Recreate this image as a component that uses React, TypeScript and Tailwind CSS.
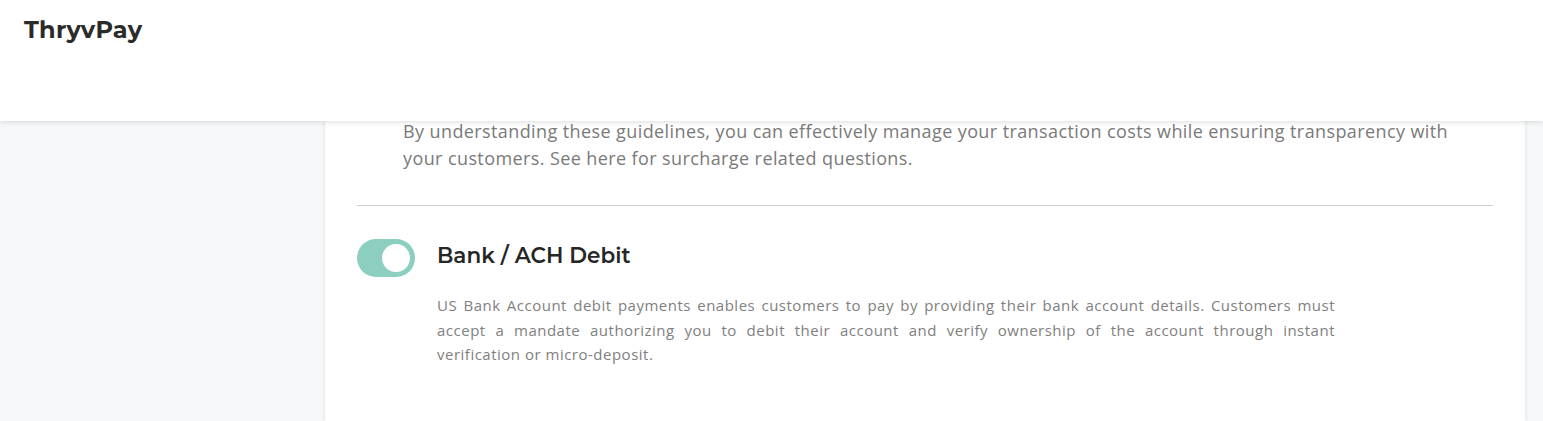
import React from "react";

export default function App() {
  return (
    <div className="h-[421px] w-[1543px] overflow-hidden bg-[#f7f8fa] flex flex-col">
      <header className="relative z-10 h-[121px] shrink-0 bg-white shadow-[0_1px_6px_rgba(0,0,0,0.14)] px-6 pt-[14px]">
        <h1 className="text-[24px] font-bold text-[#2b2b2b] font-['Montserrat','Inter',sans-serif] leading-8 tracking-[0.25px]">
          ThryvPay
        </h1>
      </header>
      <div className="flex flex-1 min-h-0">
        <aside className="w-[325px] shrink-0" />
        <main className="w-[1200px] shrink-0 bg-white shadow-[0_0_4px_rgba(0,0,0,0.12)] px-8">
          <div className="border-b border-[#cccccc] pb-[33px] pl-[46px] pr-[20px] -mt-[3px]">
            <p className="font-['Open_Sans',sans-serif] text-[18px] tracking-[0.4px] leading-[27px] text-[#7a7a7a]">
              By understanding these guidelines, you can effectively manage your transaction costs while ensuring transparency with your customers. See here for surcharge related questions.
            </p>
          </div>
          <div className="pt-[33px] flex gap-[22px]">
            <button className="h-[38px] w-[58px] shrink-0 rounded-full bg-[#8ccfc1] flex items-center justify-end pr-[5px]">
              <span className="block h-[28px] w-[28px] rounded-full bg-white" />
            </button>
            <div className="flex flex-col">
              <h2 className="pt-[2px] font-['Montserrat','Inter',sans-serif] text-[21.5px] font-semibold leading-[28px] text-[#262626]">
                Bank / ACH Debit
              </h2>
              <p className="mt-[24px] w-[898px] text-justify font-['Open_Sans',sans-serif] text-[15px] tracking-[0.5px] leading-[24.5px] text-[#808080]">
                US Bank Account debit payments enables customers to pay by providing their bank account details. Customers must accept a mandate authorizing you to debit their account and verify ownership of the account through instant verification or micro-deposit.
              </p>
            </div>
          </div>
        </main>
        <div className="flex-1" />
      </div>
    </div>
  );
}
